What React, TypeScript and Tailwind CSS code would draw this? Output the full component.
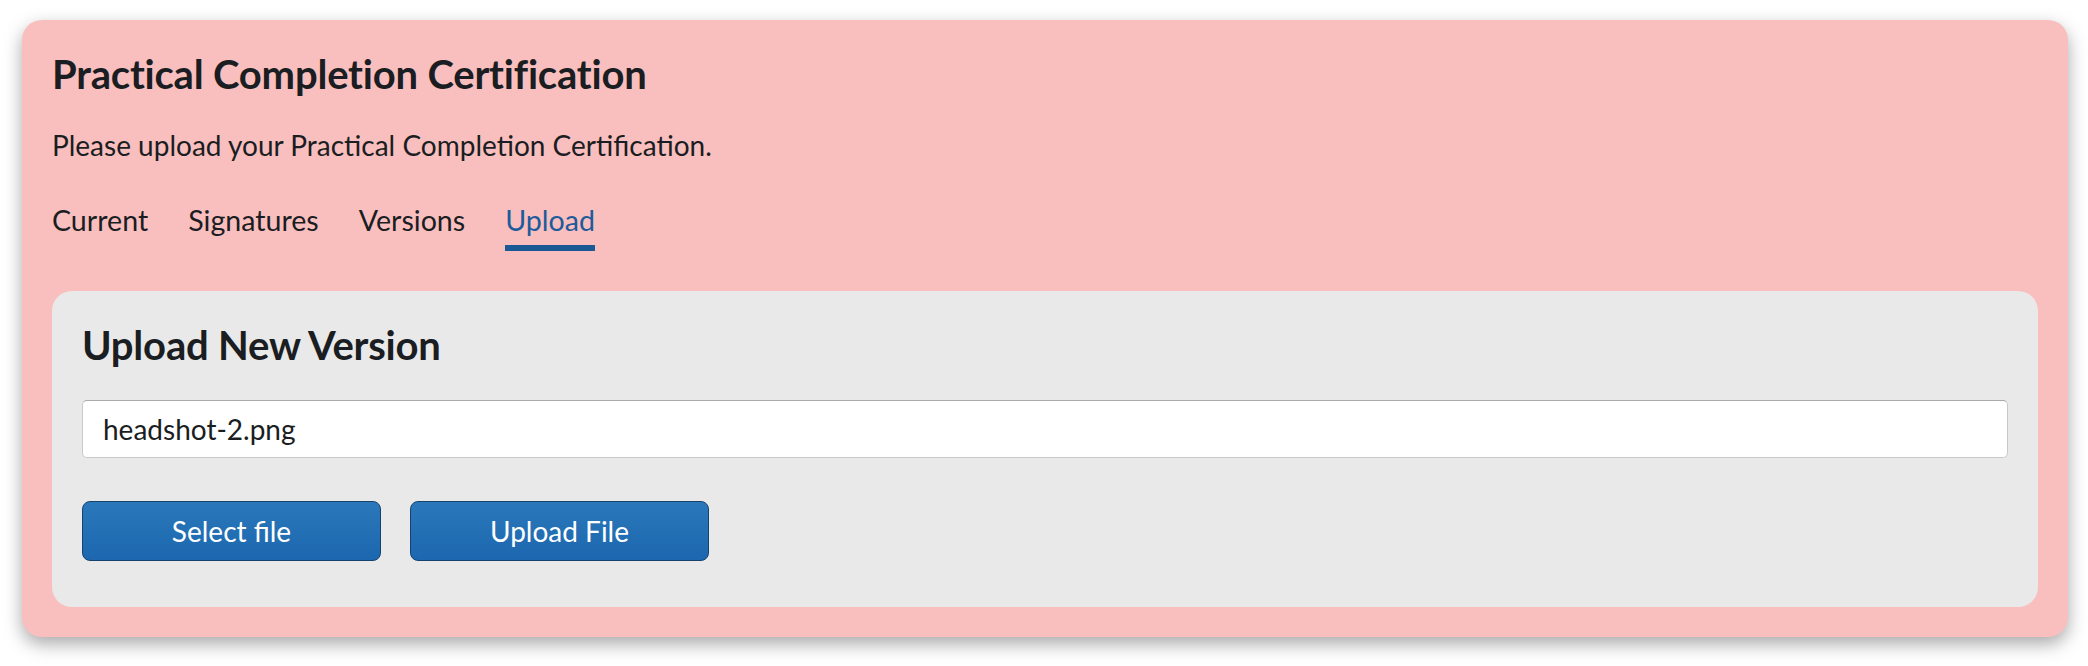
import { useState } from 'react';

const tabs = ['Current', 'Signatures', 'Versions', 'Upload'];

export default function App() {
  const [activeTab, setActiveTab] = useState('Upload');
  const [fileName] = useState('headshot-2.png');

  return (
    <div className="min-h-[666px] bg-white pt-[20px] pl-[22px] pr-[20px] font-['Lato','Liberation_Sans',sans-serif] text-[#1a1d21]">
      <div className="rounded-[20px] bg-[#f9bfbf] px-[30px] pt-[30px] pb-[30px] shadow-[0_7px_18px_rgba(0,0,0,0.34)]">
        <h1 className="text-[40px] leading-[48px] font-bold tracking-[-0.2px]">Practical Completion Certification</h1>
        <p className="mt-[30px] text-[28px] leading-[34px]">Please upload your Practical Completion Certification.</p>

        <div className="mt-[41px] flex gap-[40px]">
          {tabs.map(tab => (
            <button
              key={tab}
              onClick={() => setActiveTab(tab)}
              className={`flex flex-col text-[28.6px] leading-[35px] ${activeTab === tab ? 'text-[#1d5b9a]' : 'text-[#1a1d21]'}`}
            >
              <span>{tab}</span>
              <span className={`mt-[7px] h-[6px] w-full ${activeTab === tab ? 'bg-[#1a5896]' : 'bg-transparent'}`}></span>
            </button>
          ))}
        </div>

        <div className="mt-[40px] rounded-[20px] bg-[#e9e9e9] px-[30px] pt-[30px] pb-[46px]">
          <h2 className="text-[40px] leading-[48px] font-bold tracking-[-0.2px]">Upload New Version</h2>
          <div className="mt-[31px] flex h-[58px] items-center rounded-[5px] border border-[#c9c9c9] border-t-[#a9a9a9] bg-white pl-[20px] text-[28px]">
            {fileName}
          </div>
          <div className="mt-[43px] flex gap-[29px]">
            <button className="h-[60px] w-[299px] rounded-[8px] border border-[#17426e] bg-gradient-to-b from-[#2a78ba] to-[#1c67af] text-[28px] text-white">
              Select file
            </button>
            <button className="h-[60px] w-[299px] rounded-[8px] border border-[#17426e] bg-gradient-to-b from-[#2a78ba] to-[#1c67af] text-[28px] text-white">
              Upload File
            </button>
          </div>
        </div>
      </div>
    </div>
  );
}
